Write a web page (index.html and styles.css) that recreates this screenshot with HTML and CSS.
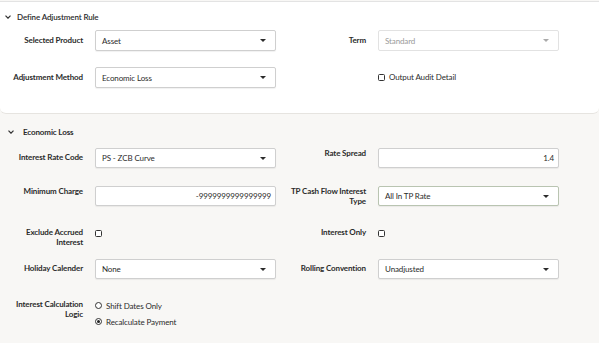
FILE: index.html
```html
<!DOCTYPE html>
<html>
<head>
<meta charset="utf-8">
<link rel="stylesheet" href="styles.css">
</head>
<body>
<div class="page">
  <section class="panel panel-top">
    <div class="sec-head">
      <svg class="chev" width="6" height="4" viewBox="0 0 6 4"><path d="M0.5 0.6 L3 3.2 L5.5 0.6" fill="none" stroke="#333" stroke-width="1.2"/></svg>
      <span>Define Adjustment Rule</span>
    </div>
    <div class="row first">
      <div class="lbl mid">Selected Product</div>
      <div class="field select"><span>Asset</span><i class="caret"></i></div>
      <div class="lbl mid">Term</div>
      <div class="field select disabled"><span>Standard</span><i class="caret"></i></div>
    </div>
    <div class="row g16">
      <div class="lbl mid">Adjustment Method</div>
      <div class="field select"><span>Economic Loss</span><i class="caret"></i></div>
      <div></div>
      <div class="check-line"><span class="checkbox"></span><span>Output Audit Detail</span></div>
    </div>
  </section>

  <section class="panel panel-bottom">
    <div class="sec-head sub">
      <svg class="chev" width="6" height="4" viewBox="0 0 6 4"><path d="M0.5 0.6 L3 3.2 L5.5 0.6" fill="none" stroke="#333" stroke-width="1.2"/></svg>
      <span>Economic Loss</span>
    </div>
    <div class="row first2">
      <div class="lbl mid">Interest Rate Code</div>
      <div class="field select"><span>PS - ZCB Curve</span><i class="caret"></i></div>
      <div class="lbl top">Rate Spread</div>
      <div class="field input num"><span>1.4</span></div>
    </div>
    <div class="row g18">
      <div class="lbl top">Minimum Charge</div>
      <div class="field input num"><span>-9999999999999999</span></div>
      <div class="lbl top">TP Cash Flow Interest Type</div>
      <div class="field select green"><span>All In TP Rate</span><i class="caret"></i></div>
    </div>
    <div class="row g22">
      <div class="lbl top2">Exclude Accrued Interest</div>
      <div class="check-cell"><span class="checkbox"></span></div>
      <div class="lbl top2">Interest Only</div>
      <div class="check-cell"><span class="checkbox"></span></div>
    </div>
    <div class="row g12">
      <div class="lbl mid">Holiday Calender</div>
      <div class="field select"><span>None</span><i class="caret"></i></div>
      <div class="lbl mid">Rolling Convention</div>
      <div class="field select"><span>Unadjusted</span><i class="caret"></i></div>
    </div>
    <div class="row g21">
      <div class="lbl top2">Interest Calculation Logic</div>
      <div class="radios">
        <div class="radio-line"><span class="radio"></span><span>Shift Dates Only</span></div>
        <div class="radio-line"><span class="radio on"></span><span>Recalculate Payment</span></div>
      </div>
    </div>
  </section>
</div>
</body>
</html>
```
FILE: styles.css
```css
* { box-sizing: border-box; }
html, body { margin: 0; padding: 0; }
body {
  background: #f8f7f5;
  font-family: "Lato", "Liberation Sans", sans-serif;
  font-size: 8px;
  letter-spacing: -0.12px;
  color: #2b2b2b;
  width: 599px;
  height: 343px;
  overflow: hidden;
}
.page { display: flex; flex-direction: column; }
.panel-top {
  margin-top: 1px;
  background: #fff;
  border-top: 1px solid #e3e3e3;
  border-bottom: 1px solid #e6e4e0;
  border-radius: 0 0 6px 6px;
  height: 113px;
  padding-top: 10px;
}
.sec-head {
  display: flex;
  align-items: center;
  height: 10px;
  padding-left: 5px;
  font-weight: 600;
  color: #2b2b2b;
}
.sec-head .chev { margin-right: 6px; }
.sec-head.sub { padding-left: 8px; font-weight: 700; }
.sec-head.sub .chev { margin-right: 9px; }
.panel-bottom { padding-top: 13px; }

.row {
  display: grid;
  grid-template-columns: 83px 181px 78px 181px;
  column-gap: 12px;
}
.row.first { margin-top: 8px; }
.row.first2 { margin-top: 11px; }
.g16 { margin-top: 16px; }
.g18 { margin-top: 18px; }
.g22 { margin-top: 22px; }
.g12 { margin-top: 12px; }
.g21 { margin-top: 21px; }

.lbl {
  text-align: right;
  font-weight: 700;
  line-height: 9.5px;
  color: #2b2b2b;
}
.lbl.mid { align-self: center; }
.lbl.top { padding-top: 1px; }
.lbl.top2 { padding-top: 0; }

.field {
  height: 21px;
  background: #fff;
  border: 1px solid #cfcfcf;
  border-radius: 2px;
  box-shadow: 0 1px 1px rgba(0,0,0,0.06);
  display: flex;
  align-items: center;
  padding: 0 6px;
  color: #2b2b2b;
}
.row.first2 .field, .g18 .field, .g12 .field { height: 20px; }
.field.select { justify-content: space-between; }
.field.num { justify-content: flex-end; padding-right: 4px; }
.field.green { border-color: #b9c4b1; }
.field.disabled { color: #9a9a9a; border-color: #e2e2e2; box-shadow: none; }
.caret {
  width: 0; height: 0;
  border-left: 3px solid transparent;
  border-right: 3px solid transparent;
  border-top: 3.5px solid #2b2b2b;
  margin-right: 3px;
}
.field.disabled .caret { border-top-color: #aaa; }

.checkbox {
  display: inline-block;
  width: 7px; height: 7px;
  border: 1px solid #333;
  border-radius: 1.5px;
  background: #fff;
  flex: none;
}
.check-line {
  display: flex;
  align-items: center;
  gap: 4px;
  align-self: center;
  margin-top: -1px;
}
.check-cell { padding-top: 1px; }

.radios { display: flex; flex-direction: column; gap: 7px; padding-top: 1px; }
.radio-line { display: flex; align-items: center; gap: 4px; height: 9px; }
.radio {
  width: 7px; height: 7px;
  border: 1px solid #333;
  border-radius: 50%;
  background: #fff;
  flex: none;
  position: relative;
}
.radio.on::after {
  content: "";
  position: absolute;
  left: 1px; top: 1px;
  width: 3px; height: 3px;
  border-radius: 50%;
  background: #222;
}
```
